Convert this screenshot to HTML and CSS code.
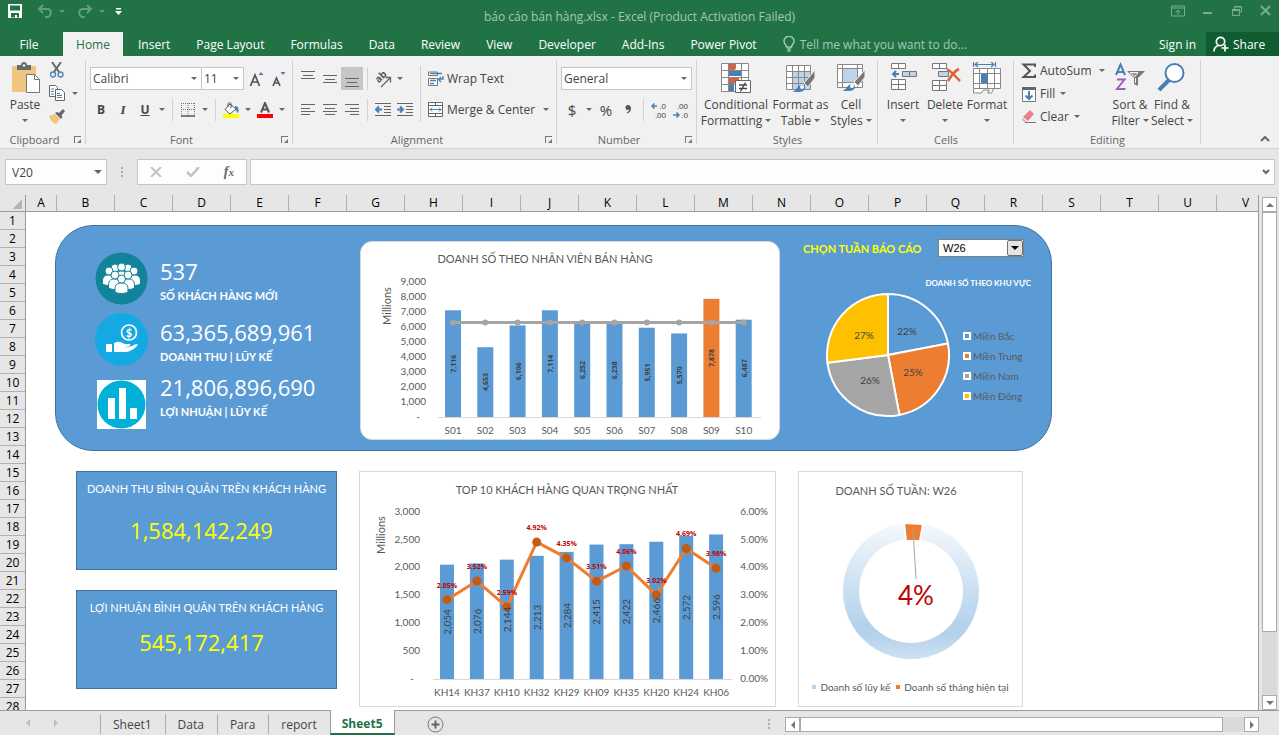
FILE: index.html
```html
<!DOCTYPE html>
<html lang="vi">
  <head>
    <meta charset="UTF-8" />
    <meta name="viewport" content="width=device-width, initial-scale=1.0" />
    <title>báo cáo bán hàng.xlsx - Excel</title>
    <link rel="stylesheet" href="styles.css">
  </head>
  <body>
    <header class="titlebar">
      <div class="quick">
        <button aria-label="Save"><svg width="16" height="16" viewBox="0 0 16 16"><path d="M1 1h14v14H1z" fill="#fff"/><path d="M3 2.500h10v5H3zM4 10h8v4.500h-2V12H8v2.500H4z" fill="#217346"/></svg></button>
        <button aria-label="Undo" class="faded"><svg width="16" height="16" viewBox="0 0 16 16"><path d="M6 2L2 6l4 4M2 6h8c5 0 5 7 0 8H8" fill="none" stroke="#fff" stroke-width="2"/></svg></button>
        <span class="caret faded light"></span>
        <button aria-label="Redo" class="faded redo"><svg width="16" height="16" viewBox="0 0 16 16"><path d="M10 2l4 4-4 4M14 6H6c-5 0-5 7 0 8h2" fill="none" stroke="#fff" stroke-width="2"/></svg></button>
        <span class="caret faded light"></span>
        <button aria-label="Customize" class="custom"><svg width="7" height="8" viewBox="0 0 7 8"><path d="M1 1h5v1.500H1zM0 4h7L3.500 8z" fill="#fff"/></svg></button>
      </div>
      <h1>báo cáo bán hàng.xlsx - Excel (Product Activation Failed)</h1>
      <div class="window-buttons">
        <button aria-label="Ribbon options"><svg width="14" height="12" viewBox="0 0 14 12"><path d="M.5 1h13v10H.5zM.5 3h13M7 10V5M4.500 7.500L7 5l2.500 2.500" fill="none" stroke="#fff"/></svg></button>
        <button aria-label="Minimize"><svg width="12" height="12" viewBox="0 0 12 12"><path d="M1 7h9v2H1z" fill="#fff"/></svg></button>
        <button aria-label="Restore"><svg width="12" height="12" viewBox="0 0 12 12"><path d="M1.500 5h7v5.500h-7zM3.500 5V1.500h7V7H9" fill="none" stroke="#fff"/><path d="M1 4h8v2H1zM3 1h8v1.500H3z" fill="#fff"/></svg></button>
        <button aria-label="Close"><svg width="12" height="12" viewBox="0 0 12 12"><path d="M1 1l9 9M10 1l-9 9" stroke="#fff" stroke-width="2"/></svg></button>
      </div>
    </header>

    <nav class="tabs">
      <button class="file">File</button>
      <button class="active">Home</button>
      <button>Insert</button>
      <button>Page Layout</button>
      <button>Formulas</button>
      <button>Data</button>
      <button>Review</button>
      <button>View</button>
      <button>Developer</button>
      <button>Add-Ins</button>
      <button>Power Pivot</button>
      <button class="tell"><svg width="12" height="16" viewBox="0 0 12 16"><path d="M3.500 11C3.500 8.500 1 8 1 5.300a5 5 0 0 1 10 0C11 8 8.500 8.500 8.500 11zM4 13h4M4.500 15h3" fill="none" stroke="#a6c7b5" stroke-width="1.500"/></svg>Tell me what you want to do...</button>
      <button class="signin">Sign in</button>
      <button class="share"><svg width="16" height="16" viewBox="0 0 16 16"><circle cx="7.500" cy="5.500" r="4.200" fill="none" stroke="#fff" stroke-width="1.700"/><path d="M1 15.500c0-4 2-5.500 5-6M8.500 12h7M12 8.500v7" fill="none" stroke="#fff" stroke-width="1.700"/></svg>Share</button>
    </nav>

    <section class="ribbon">
      <div class="group clipboard">
        <div class="tools">
          <button class="big"><svg width="32" height="32" viewBox="0 0 32 32"><path d="M3 4h24v26H3z" fill="#eec67e"/><path d="M8 8V3h4c0-4 6-4 6 0h4v5z" fill="#6a6a6a"/><circle cx="15" cy="3.500" r="1.300" fill="#f1f1f1"/><path d="M17.500 12.500h8l5 5v13h-13z" fill="#fff" stroke="#777"/><path d="M25.500 12.500v5h5" fill="none" stroke="#777"/></svg><span>Paste</span><i class="caret"></i></button>
          <div class="clip-col">
            <button aria-label="Cut"><svg width="16" height="16" viewBox="0 0 16 16"><path d="M3 0l7 10M12 0L5 10" stroke="#666" stroke-width="2"/><circle cx="4" cy="12.500" r="2.500" fill="none" stroke="#4a7fb5" stroke-width="1.300"/><circle cx="11.500" cy="12.500" r="2.500" fill="none" stroke="#4a7fb5" stroke-width="1.300"/></svg></button>
            <button aria-label="Copy"><svg width="16" height="16" viewBox="0 0 16 16"><path d="M.5.5h6l2 2v9h-8z" fill="#fff" stroke="#666"/><path d="M6.500 4.500h6l3 3v8h-9z" fill="#fff" stroke="#666"/><path d="M2 4h3M2 6.500h3M2 9h3M8 8.500h3M8 10.500h5M8 12.500h5" stroke="#4a7fb5"/></svg></button><i class="caret"></i>
            <button aria-label="Format Painter"><svg width="16" height="16" viewBox="0 0 16 16"><path d="M0 8l6-2 5 5-4 5c-3-1-6-4-7-8z" fill="#eec67e"/><path d="M6 5l6 6 1.500-2-1-1.500L16 3l-2-2-4 4-2-1z" fill="#666"/></svg></button>
          </div>
        </div>
        <h2>Clipboard</h2>
        <button class="launch" aria-label="Clipboard options"></button>
      </div>

      <div class="group font">
        <div class="rows">
          <div class="row">
            <label class="combo font-name"><select aria-label="Font"><option>Calibri</option></select></label>
            <label class="combo font-size"><select aria-label="Font size"><option>11</option></select></label>
            <button class="tool grow" aria-label="Increase font"><svg width="16" height="16" viewBox="0 0 16 16"><path d="M1.500 15L6 4l4.500 11M3 11h6" fill="none" stroke="#555" stroke-width="1.700"/><path d="M9.500 4h5L12 1z" fill="#4a7fb5"/></svg></button>
            <button class="tool" aria-label="Decrease font"><svg width="16" height="16" viewBox="0 0 16 16"><path d="M2 15l3.500-8L9 15M3 12h5" fill="none" stroke="#555" stroke-width="1.700"/><path d="M9.500 1h5L12 4z" fill="#4a7fb5"/></svg></button>
          </div>
          <div class="row">
            <button class="tool bold">B</button>
            <button class="tool italic">I</button>
            <button class="tool underline">U</button>
            <i class="caret"></i><i class="sep"></i>
            <button class="tool" aria-label="Borders"><svg width="14" height="14" viewBox="0 0 14 14"><path d="M.5 0v13M7 0v13M13.500 0v13M0 .5h14M0 6.500h14" fill="none" stroke="#777" stroke-dasharray="1 1"/><path d="M0 13h14" stroke="#555" stroke-width="1.500"/></svg></button>
            <i class="caret"></i><i class="sep"></i>
            <button class="tool" aria-label="Fill Color"><svg width="17" height="16" viewBox="0 0 17 16"><path d="M7 2l6 5-6 5-5-4.500z" fill="#fff" stroke="#555"/><path d="M5 5V1.500q2-2 3 0V6" fill="none" stroke="#555"/><path d="M12 4c4 0 4 4 3 7-2-1-2-4-3-5z" fill="#4a7fb5"/><path d="M0 12h16v4H0z" fill="#ff0"/></svg></button>
            <i class="caret"></i>
            <button class="tool" aria-label="Font Color"><svg width="17" height="16" viewBox="0 0 17 16"><path d="M4 10.500L8 1l4 9.500M5.500 7.500h5" fill="none" stroke="#555" stroke-width="2"/><path d="M0 12h16v4H0z" fill="#f00"/></svg></button>
            <i class="caret"></i>
          </div>
        </div>
        <h2>Font</h2>
        <button class="launch" aria-label="Font options"></button>
      </div>

      <div class="group alignment">
        <div class="align-cols">
          <div class="rows">
            <div class="row">
              <button class="tool" aria-label="Top align"><svg class="lines" width="14" height="16" viewBox="0 0 14 16"><path d="M0 .5h14M2 4.500h10M0 7.500h14"/></svg></button>
              <button class="tool" aria-label="Middle align"><svg class="lines" width="14" height="16" viewBox="0 0 14 16"><path d="M0 4.500h14M2 8.500h10M0 11.500h14"/></svg></button>
              <button class="tool pressed" aria-label="Bottom align"><svg class="lines" width="14" height="16" viewBox="0 0 14 16"><path d="M0 7.500h14M2 11.500h10M0 15.500h14"/></svg></button>
              <i class="sep"></i>
              <button class="tool" aria-label="Orientation"><svg width="20" height="20" viewBox="0 0 20 20"><text x="8" y="11" transform="rotate(-45 8 8)" class="ab">ab</text><path d="M8 18l9-9M12.500 8.500h5v5" fill="none" stroke="#666" stroke-width="1.300"/></svg></button>
              <i class="caret"></i>
            </div>
            <div class="row">
              <button class="tool" aria-label="Align left"><svg class="lines" width="14" height="12" viewBox="0 0 14 12"><path d="M0 .5h14M0 4.500h9M0 7.500h14M0 10.500h9"/></svg></button>
              <button class="tool" aria-label="Center"><svg class="lines" width="14" height="12" viewBox="0 0 14 12"><path d="M0 .5h14M2 4.500h10M0 7.500h14M2 10.500h10"/></svg></button>
              <button class="tool" aria-label="Align right"><svg class="lines" width="14" height="12" viewBox="0 0 14 12"><path d="M0 .5h14M5 4.500h9M0 7.500h14M5 10.500h9"/></svg></button>
              <i class="sep"></i>
              <button class="tool" aria-label="Decrease indent"><svg class="lines" width="16" height="14" viewBox="0 0 16 14"><path d="M0 .5h16M9 3.500h7M9 6.500h7M9 9.500h7M0 12.500h16"/><path class="blue" d="M7 6.500H1M4 3.500l-3 3 3 3"/></svg></button>
              <button class="tool" aria-label="Increase indent"><svg class="lines" width="16" height="14" viewBox="0 0 16 14"><path d="M0 .5h16M9 3.500h7M9 6.500h7M9 9.500h7M0 12.500h16"/><path class="blue" d="M0 6.500h6M3 3.500l3 3-3 3"/></svg></button>
            </div>
          </div>
          <i class="sep tall"></i>
          <div class="rows">
            <div class="row">
              <button class="text-tool"><svg width="16" height="16" viewBox="0 0 16 16"><path d="M.5 1v3.500h9V1zM.5 7.500h9v7h-9z" fill="#fff" stroke="#777"/><path d="M2 2.500h12M2 9.500h6M2 12.500h4M15 5v3h-4M13 6l-2.500 2.500L13 11" fill="none" stroke="#4a7fb5" stroke-width="1.300"/></svg>Wrap Text</button>
            </div>
            <div class="row">
              <button class="text-tool"><svg width="16" height="16" viewBox="0 0 16 16"><path d="M.5.5h14v14H.5zM.5 3.500h14M.5 11.500h14M7.500 0v3.500M7.500 11.500v3" fill="#fff" stroke="#666"/><path d="M2 7.500h11M4 5.500l-2 2 2 2M11 5.500l2 2-2 2" fill="none" stroke="#4a7fb5"/></svg>Merge &amp; Center</button>
              <i class="caret"></i>
            </div>
          </div>
        </div>
        <h2>Alignment</h2>
        <button class="launch" aria-label="Alignment options"></button>
      </div>

      <div class="group number">
        <div class="rows">
          <div class="row">
            <label class="combo number-format"><select aria-label="Number format"><option>General</option></select></label>
          </div>
          <div class="row">
            <button class="tool sign">$</button>
            <i class="caret"></i>
            <button class="tool sign percent">%</button>
            <button class="tool" aria-label="Comma style"><svg width="6" height="9" viewBox="0 0 6 9"><circle cx="3" cy="2.500" r="2.500" fill="#555"/><path d="M5 2c1 3-1 5-3 6" fill="none" stroke="#555" stroke-width="1.300"/></svg></button>
            <i class="sep"></i>
            <button class="tool decimals" aria-label="Increase decimal"><svg width="18" height="20" viewBox="0 0 18 20"><path d="M7 6H2M4.500 3.500L2 6l2.500 2.500" fill="none" stroke="#4a7fb5" stroke-width="1.500"/><text x="16" y="9">.0</text><text x="16" y="18">.00</text></svg></button>
            <button class="tool decimals" aria-label="Decrease decimal"><svg width="18" height="20" viewBox="0 0 18 20"><path d="M1 15h6M4.500 12.500L7 15l-2.500 2.500" fill="none" stroke="#4a7fb5" stroke-width="1.500"/><text x="16" y="9">.00</text><text x="16" y="18">.0</text></svg></button>
          </div>
        </div>
        <h2>Number</h2>
        <button class="launch" aria-label="Number options"></button>
      </div>

      <div class="group styles">
        <div class="tools">
          <button class="big wide"><svg width="32" height="32" viewBox="0 0 32 32"><path d="M1.500 1.500h27v28h-27z" fill="#fff"/><path d="M9 2h6v6H9zM9 15h10v6H9z" fill="#d9623f"/><path d="M9 8h12v6H9zM9 21h5v8H9z" fill="#4a7fb5"/><path d="M1.500 1.500h27v28h-27zM8.500 1v29M15.500 1v6M21.500 1v29M1 8.500h28M1 15.500h28M1 22.500h28" fill="none" stroke="#888"/><path d="M15.500 18.500h15v12h-15z" fill="#fff" stroke="#666"/><path d="M19 23h8M19 26.500h8M25.500 20.500l-5 9" stroke="#444" stroke-width="1.300"/></svg><span>Conditional</span><span>Formatting<i class="caret"></i></span></button>
          <button class="big mid"><svg width="32" height="32" viewBox="0 0 32 32"><path d="M1.500 3.500h24v24h-24z" fill="#fff"/><path d="M8 9h18v18H8z" fill="#bdd3e8"/><path d="M1.500 3.500h24v24h-24zM7.500 3v25M13.500 3v25M19.500 3v25M1 9.500h25M1 15.500h25M1 21.500h25" fill="none" stroke="#888"/><path d="M19 21L30 8v8l-7 9z" fill="#777" stroke="#f1f1f1"/><path d="M7 30c5-1 5-8 11-7 4 2 2 7-4 7z" fill="#4a7fb5"/><circle cx="17" cy="25" r="2" fill="#fff"/></svg><span>Format as</span><span>Table<i class="caret"></i></span></button>
          <button class="big"><svg width="32" height="32" viewBox="0 0 32 32"><path d="M2.500 2.500h25v23h-25z" fill="#fff"/><path d="M8 7h14v13H8z" fill="#bdd3e8"/><path d="M2.500 2.500h25v23h-25zM7.500 2v24M22.500 2v24M2 6.500h26M2 20.500h26" fill="none" stroke="#888"/><path d="M19 20L30 8v7l-7 9z" fill="#777" stroke="#f1f1f1"/><path d="M7 29c5-1 5-8 11-7 4 2 2 7-4 7z" fill="#4a7fb5"/><circle cx="17" cy="24" r="2" fill="#fff"/></svg><span>Cell</span><span>Styles<i class="caret"></i></span></button>
        </div>
        <h2>Styles</h2>
      </div>

      <div class="group cells">
        <div class="tools">
          <button class="big"><svg width="32" height="32" viewBox="0 0 32 32"><path d="M4.500 1.500h14v5h-14zM11.500 1.500v5M4.500 17.500h14v10h-14zM4.500 22.500h14M11.500 17.500v10" fill="#fff" stroke="#777"/><path d="M15.500 9.500h14v5h-14zM22.500 9.500v5" fill="#bdd3e8" stroke="#777"/><path d="M12 12H6M9 9l-3 3 3 3" fill="none" stroke="#4a7fb5" stroke-width="2"/></svg><span>Insert</span><i class="caret"></i></button>
          <button class="big"><svg width="32" height="32" viewBox="0 0 32 32"><path d="M3.500 1.500h14v5h-14zM10.500 1.500v5M3.500 18.500h14v10h-14zM3.500 23.500h14M10.500 18.500v10" fill="#fff" stroke="#777"/><path d="M9.500 9.500h10v5h-10z" fill="#bdd3e8" stroke="#777"/><path d="M18 7c5 3 8 7 13 12M30 7c-5 2-8 7-11 12" fill="none" stroke="#d9623f" stroke-width="2.500"/></svg><span>Delete</span><i class="caret"></i></button>
          <button class="big"><svg width="32" height="32" viewBox="0 0 32 32"><path d="M2.500 6.500h27v20h-27zM8.500 6v21M16.500 6v21M23.500 6v21M2 11.500h28M2 21.500h28" fill="#fff" stroke="#888"/><path d="M10 12h7v9h-7z" fill="#4a7fb5"/><path d="M2.500 0v5M24.500 0v5M4 2.500h19M7 0L4 2.500 7 5M20 0l3 2.500L20 5" fill="none" stroke="#4a7fb5" stroke-width="1.200"/><path d="M2.500 27v4h8l2-3h6l-2 3h4l2-4" fill="#fff" stroke="#888"/></svg><span>Format</span><i class="caret"></i></button>
        </div>
        <h2>Cells</h2>
      </div>

      <div class="group editing">
        <div class="tools">
          <div class="edit-col">
            <button class="text-tool autosum"><svg width="16" height="16" viewBox="0 0 16 16"><path d="M14 4V1.500H2.500L9 8l-6.500 6H14v-2.500" fill="none" stroke="#555" stroke-width="2"/></svg>AutoSum<i class="caret"></i></button>
            <button class="text-tool"><svg width="16" height="16" viewBox="0 0 16 16"><path d="M1.500 1.500h13v14h-13z" fill="#fff" stroke="#777"/><path d="M1 1h14v3H1z" fill="#666"/><path d="M8 5v8M4.500 9.500L8 13l3.500-3.500" fill="none" stroke="#4a7fb5" stroke-width="2"/></svg>Fill<i class="caret"></i></button>
            <button class="text-tool"><svg width="16" height="16" viewBox="0 0 16 16"><path d="M9 1l4 4-6 7-5-4z" fill="#e8818f"/><path d="M1.500 9l4.500 4H4l-3-2z" fill="#ee9aa5"/><path d="M4 13.500h11" stroke="#777"/></svg>Clear<i class="caret"></i></button>
          </div>
          <button class="big"><svg width="32" height="32" viewBox="0 0 32 32"><path d="M2 13L6.500 2.500 11 13M4 10h6" fill="none" stroke="#4a7fb5" stroke-width="2"/><path d="M3 17.500h7.500L3 27h8.500" fill="none" stroke="#9b5fb5" stroke-width="2"/><path d="M13 9h18l-7 7v8l-4-2v-6z" fill="#777"/><path d="M16 10.500h8L20.500 15zM21.500 16v5" fill="#999" stroke="#f1f1f1"/></svg><span>Sort &amp;</span><span>Filter<i class="caret"></i></span></button>
          <button class="big"><svg width="32" height="32" viewBox="0 0 32 32"><path d="M3 28l10-10" stroke="#4a7fb5" stroke-width="4"/><circle cx="18.500" cy="11" r="9" fill="#fff" stroke="#4a7fb5" stroke-width="2"/></svg><span>Find &amp;</span><span>Select<i class="caret"></i></span></button>
        </div>
        <h2>Editing</h2>
      </div>
      <button class="collapse" aria-label="Collapse ribbon"><svg width="10" height="6" viewBox="0 0 10 6"><path d="M1 5l4-4 4 4" fill="none" stroke="#666" stroke-width="2"/></svg></button>
    </section>

    <section class="formula-bar">
      <label class="combo name-box"><select aria-label="Name box"><option>V20</option></select></label>
      <span class="dots"></span>
      <div class="fx-box">
        <button aria-label="Cancel"><svg width="12" height="10" viewBox="0 0 12 10"><path d="M1 0l10 10M11 0L1 10" stroke="#c3c3c3" stroke-width="2"/></svg></button>
        <button aria-label="Enter"><svg width="14" height="10" viewBox="0 0 14 10"><path d="M1 5l4 4 8-9" fill="none" stroke="#c3c3c3" stroke-width="2.500"/></svg></button>
        <button class="fx">f<small>x</small></button>
      </div>
      <div class="formula">
        <input type="text" aria-label="Formula" />
        <svg width="8" height="6" viewBox="0 0 8 6"><path d="M1 1l3 3 3-3" fill="none" stroke="#666" stroke-width="2"/></svg>
      </div>
    </section>

    <main class="workbook">
      <div class="sheet">
        <div class="col-head" id="colHead"><span class="corner"></span></div>
        <div class="sheet-body">
          <div class="row-head" id="rowHead"></div>
          <div class="canvas">
            <section class="panel">
              <div class="kpi-icons">
                <svg width="53" height="53" viewBox="0 0 53 53">
                  <circle cx="26.500" cy="26.500" r="26" fill="#11839b"/>
                  <defs>
                    <g id="person"><path d="M-6.500 13v-3c0-5 3-6 6.500-6s6.500 1 6.500 6v3c-4 2-9 2-13 0z"/><circle cx="0" cy="0" r="4"/></g>
                  </defs>
                  <g fill="#fff" stroke="#11839b">
                    <use href="#person" x="20" y="16"/><use href="#person" x="33" y="16"/><use href="#person" x="26.500" y="15"/>
                    <use href="#person" x="14" y="19"/><use href="#person" x="39" y="19"/>
                    <use href="#person" x="20" y="23"/><use href="#person" x="33" y="23"/><use href="#person" x="26.500" y="27"/>
                  </g>
                </svg>
                <svg width="53" height="53" viewBox="0 0 53 53">
                  <circle cx="26.500" cy="26.500" r="26.500" fill="#15a9e3"/>
                  <circle cx="34" cy="19.500" r="7.500" fill="none" stroke="#fff" stroke-width="1.700"/>
                  <text x="34" y="24" class="dollar">$</text>
                  <path d="M11 31h6v8h-6zM19 30c6-3 8 0 11 1h5c1 2-1 3-6 3 4 1 8-1 12-3 2 0 2 1 1 2-4 4-8 6-12 6h-11z" fill="#fff"/>
                </svg>
                <svg width="49" height="49" viewBox="0 0 49 49">
                  <path d="M0 0h49v49H0z" fill="#fff"/><circle cx="24.500" cy="24.500" r="24" fill="#00b0d8"/>
                  <path d="M11 18h7v21h-7zM22 8h7v31h-7zM33 28h7v11h-7z" fill="#fff"/>
                </svg>
              </div>
              <dl class="kpis">
                <div><dd>537</dd><dt>SỐ KHÁCH HÀNG MỚI</dt></div>
                <div><dd>63,365,689,961</dd><dt>DOANH THU | LŨY KẾ</dt></div>
                <div><dd>21,806,896,690</dd><dt>LỢI NHUẬN | LŨY KẾ</dt></div>
              </dl>
              <div class="sales-card">
                <svg id="salesChart" class="chart" viewBox="0 0 418 197" role="img" aria-label="Doanh số theo nhân viên"></svg>
              </div>
              <div class="region">
                <div class="week">
                  <label for="week">CHỌN TUẦN BÁO CÁO</label>
                  <span class="week-select"><select id="week"><option>W26</option></select></span>
                </div>
                <h3>DOANH SỐ THEO KHU VỰC</h3>
                <div class="region-body">
                  <svg id="pieChart" class="chart" width="126" height="126" viewBox="0 0 126 126" role="img" aria-label="Doanh số theo khu vực"></svg>
                  <ul class="pie-legend">
                    <li class="bac">Miền Bắc</li>
                    <li class="trung">Miền Trung</li>
                    <li class="nam">Miền Nam</li>
                    <li class="dong">Miền Đông</li>
                  </ul>
                </div>
              </div>
            </section>

            <section class="lower">
              <div class="averages">
                <div class="average">
                  <h3>DOANH THU BÌNH QUÂN TRÊN KHÁCH HÀNG</h3>
                  <p>1,584,142,249</p>
                </div>
                <div class="average profit">
                  <h3>LỢI NHUẬN BÌNH QUÂN TRÊN KHÁCH HÀNG</h3>
                  <p>545,172,417</p>
                </div>
              </div>
              <div class="top-card">
                <svg id="topChart" class="chart" viewBox="0 0 415 234" role="img" aria-label="Top 10 khách hàng"></svg>
              </div>
              <div class="week-card">
                <h3>DOANH SỐ TUẦN: W26</h3>
                <svg class="chart" width="136" height="136" viewBox="0 0 136 136" role="img" aria-label="4%">
                  <defs>
                    <linearGradient id="ring" x1="0" y1="0" x2="0" y2="1">
                      <stop offset="0" stop-color="#f5f9fd"/>
                      <stop offset=".74" stop-color="#b5d2ec"/>
                      <stop offset=".83" stop-color="#b5d2ec"/>
                      <stop offset="1" stop-color="#cfe1f3"/>
                    </linearGradient>
                  </defs>
                  <path d="M68 0a68 68 0 1 1-.1 0zM68 16a52 52 0 1 0 .1 0z" fill="url(#ring)"/>
                  <path d="M61 0l19 1-3 17H63z" fill="#ed7d31" stroke="#fff" stroke-width="2"/>
                  <path d="M70 7l3 49" stroke="#a6a6a6"/>
                  <text x="73" y="82" class="share-value">4%</text>
                </svg>
                <ul class="ring-legend">
                  <li>Doanh số lũy kế</li>
                  <li class="current">Doanh số tháng hiện tại</li>
                </ul>
              </div>
            </section>
          </div>
        </div>
      </div>
      <div class="vscroll">
        <button aria-label="Scroll up"><i class="up"></i></button>
        <div class="track"><div class="thumb"></div></div>
        <button aria-label="Scroll down"><i class="down"></i></button>
      </div>
    </main>

    <footer class="sheet-tabs">
      <div class="sheet-nav"><i class="left"></i><i class="right"></i></div>
      <button>Sheet1</button>
      <button>Data</button>
      <button>Para</button>
      <button>report</button>
      <button class="active">Sheet5</button>
      <button class="add" aria-label="New sheet"><svg width="17" height="17" viewBox="0 0 17 17"><circle cx="8.500" cy="8.500" r="7.500" fill="none" stroke="#777"/><path d="M8.500 4.500v8M4.500 8.500h8" stroke="#666" stroke-width="2"/></svg></button>
      <span class="dots"></span>
      <div class="hscroll">
        <button aria-label="Scroll left"><i class="left"></i></button>
        <div class="thumb"></div>
        <button aria-label="Scroll right"><i class="right"></i></button>
      </div>
    </footer>

    <script src="script.js"></script>
  </body>
</html>
```
FILE: styles.css
```css
*,
*::before {
  box-sizing: border-box;
}

body {
  margin: 0;
  height: 100vh;
  display: flex;
  flex-direction: column;
  overflow: hidden;
  background-color: #e6e6e6;
  color: #444;
  font-family: "Open Sans", "Noto Sans", sans-serif;
  font-size: 12px;
}

h1, h2, h3, p, ul, dl, dd, dt {
  margin: 0;
  padding: 0;
  font-weight: normal;
  font-size: 12px;
}

ul {
  list-style: none;
}

button {
  border: 0;
  padding: 0;
  background: none;
  color: inherit;
  font: inherit;
  white-space: nowrap;
}

svg {
  display: block;
  flex: none;
}

/* title bar */
.titlebar {
  display: grid;
  grid-template-columns: 1fr auto 1fr;
  align-items: center;
  height: 32px;
  flex: none;
  background-color: #217346;
  color: #a6c7b5;
}

.quick {
  display: flex;
  align-items: center;
  gap: 6px;
  height: 22px;
  align-self: start;
  padding-left: 7px;
}

.quick button:nth-child(2) {
  margin-left: 8px;
}

.quick .redo {
  margin-left: 6px;
}

.quick .custom {
  margin-left: 4px;
}

.faded {
  opacity: 0.3;
}

.window-buttons {
  display: flex;
  justify-content: flex-end;
  align-items: center;
  gap: 17px;
  height: 22px;
  align-self: start;
  padding-right: 7px;
  opacity: 0.4;
}

.caret {
  flex: none;
  display: inline-block;
  border: 3px solid transparent;
  border-top-color: #666;
  border-bottom: 0;
}

.caret.light {
  border-top-color: #fff;
}

/* ribbon tabs */
.tabs {
  display: flex;
  height: 24px;
  flex: none;
  background-color: #217346;
  color: #fff;
}

.tabs button {
  padding: 0 13px;
}

.tabs .file {
  width: 63px;
  padding: 0 5px 0 0;
}

.tabs .active {
  width: 60px;
  margin-right: 2px;
  background-color: #f1f1f1;
  color: #217346;
}

.tabs .tell {
  display: flex;
  align-items: center;
  gap: 5px;
  color: #a6c7b5;
}

.tabs .signin {
  margin-left: auto;
  padding: 0 10px;
}

.tabs .share {
  display: flex;
  align-items: center;
  gap: 4px;
  width: 73px;
  padding: 0 0 0 7px;
  background-color: #0e5c2f;
}

/* ribbon */
.ribbon {
  display: flex;
  height: 93px;
  flex: none;
  background-color: #f1f1f1;
  border-bottom: 1px solid #d2d2d2;
}

.group {
  position: relative;
  display: flex;
  flex-direction: column;
  justify-content: space-between;
}

.group::after {
  content: "";
  position: absolute;
  right: 0;
  top: 4px;
  bottom: 4px;
  border-right: 1px solid #d2d2d2;
}

.group h2 {
  height: 17px;
  line-height: 17px;
  font-size: 11px;
  text-align: center;
  color: #666;
}

.clipboard { width: 86px; }
.clipboard h2 { padding-right: 17px; }
.font { width: 207px; padding-left: 4px; }
.font h2 { padding-right: 20px; }
.alignment { width: 264px; padding-left: 4px; }
.alignment h2 { padding-right: 20px; }
.number { width: 140px; padding-left: 4px; }
.number h2 { padding-right: 20px; }
.styles { width: 181px; }
.cells { width: 136px; }
.editing { width: 187px; }

.launch {
  position: absolute;
  right: 5px;
  bottom: 5px;
  width: 7px;
  height: 7px;
  border-left: 1px solid #777;
  border-top: 1px solid #777;
}

.launch::after {
  content: "";
  position: absolute;
  right: 0;
  bottom: 0;
  border: 2px solid #777;
  border-left-color: transparent;
  border-top-color: transparent;
}

.tools {
  display: flex;
  padding-left: 4px;
}

.rows {
  display: flex;
  flex-direction: column;
  gap: 8px;
  padding-top: 11px;
}

.row {
  display: flex;
  align-items: center;
  height: 23px;
}

.big {
  display: flex;
  flex-direction: column;
  align-items: center;
  width: 42px;
  padding-top: 6px;
}

.big span {
  height: 16px;
  line-height: 16px;
  margin-top: 3px;
}

.big span + span {
  margin-top: 0;
}

.big .caret {
  margin-top: 6px;
}

.big span .caret {
  margin: 0 0 3px 3px;
}

.big.wide { width: 70px; }
.big.mid { width: 59px; }

.clip-col {
  display: grid;
  grid-template-columns: 16px 6px;
  grid-template-rows: repeat(3, 16px);
  gap: 7px;
  align-items: center;
  padding: 6px 0 0 3px;
}

.clip-col button:first-child {
  grid-column: 1 / 3;
}

.combo {
  position: relative;
  height: 23px;
  background-color: #fff;
  border: 1px solid #c6c6c6;
}

.combo::after {
  content: "";
  position: absolute;
  right: 4px;
  top: 9px;
  border: 3px solid transparent;
  border-top-color: #666;
  border-bottom: 0;
}

.combo select {
  appearance: none;
  width: 100%;
  height: 100%;
  padding: 0 2px;
  border: 0;
  background: none;
  color: #444;
  font: inherit;
}

.font-name { width: 112px; }
.font-size { width: 43px; margin-left: -1px; }
.number-format { width: 131px; }

.tool {
  display: flex;
  align-items: center;
  justify-content: center;
  width: 22px;
  height: 23px;
  flex: none;
}

.grow {
  margin-left: 2px;
}

.row .caret {
  margin: 0 3px;
}

.bold { font-weight: bold; }
.italic { font: italic bold 13px "Liberation Serif", serif; }
.underline { font-weight: bold; text-decoration: underline; }

.pressed {
  background-color: #c6c6c6;
}

.sep {
  flex: none;
  height: 22px;
  margin: 0 4px;
  border-left: 1px solid #d2d2d2;
}

.sep.tall {
  height: 56px;
  margin: 10px 7px 0 4px;
}

.align-cols {
  display: flex;
}

.lines {
  fill: none;
  stroke: #666;
}

.lines .blue {
  stroke: #4a7fb5;
  stroke-width: 2px;
}

.ab {
  fill: #555;
  font-size: 10px;
  font-weight: bold;
  text-anchor: middle;
}

.text-tool {
  display: flex;
  align-items: center;
  gap: 3px;
}

.text-tool .caret {
  margin-left: 2px;
}

.alignment .text-tool + .caret {
  margin-left: 8px;
}

.sign {
  font-size: 15px;
}

.decimals text {
  fill: #444;
  font: 8px "Liberation Sans", sans-serif;
  text-anchor: end;
}

.edit-col {
  width: 91px;
  padding: 3px 0 0 3px;
}

.edit-col .text-tool {
  height: 23px;
}

.autosum .caret {
  margin-left: 4px;
}

.collapse {
  margin: 80px 9px 0 auto;
  height: 6px;
}

/* formula bar */
.formula-bar {
  display: flex;
  align-items: flex-start;
  height: 46px;
  flex: none;
  padding: 10px 4px 0 5px;
}

.name-box {
  width: 102px;
  height: 26px;
  background-color: #fdfdfd;
}

.name-box::after {
  border-width: 4px 4px 0;
  top: 10px;
}

.name-box select {
  padding-left: 6px;
}

.dots {
  width: 2px;
  height: 10px;
  margin: 8px 14px 0;
  background: repeating-linear-gradient(#aaa 0 2px, transparent 2px 4px);
}

.fx-box {
  display: flex;
  align-items: center;
  justify-content: space-around;
  width: 110px;
  height: 26px;
  background-color: #fdfdfd;
  border: 1px solid #c6c6c6;
}

.fx {
  font: italic bold 14px "Liberation Serif", serif;
  color: #666;
}

.fx small {
  font-size: 11px;
}

.formula {
  display: flex;
  align-items: center;
  flex: 1;
  height: 26px;
  margin-left: 3px;
  padding-right: 4px;
  background-color: #fdfdfd;
  border: 1px solid #c6c6c6;
}

.formula input {
  flex: 1;
  border: 0;
  background: none;
}

/* worksheet */
.workbook {
  display: flex;
  flex: 1;
  min-height: 0;
}

.sheet {
  display: flex;
  flex-direction: column;
  flex: 1;
  min-width: 0;
  border-right: 1px solid #9b9b9b;
}

.col-head {
  display: flex;
  height: 17px;
  flex: none;
  overflow: hidden;
  border-bottom: 1px solid #9b9b9b;
  color: #000;
}

.col-head span {
  flex: none;
  width: 58px;
  line-height: 16px;
  text-align: center;
  border-right: 1px solid #b1b1b1;
}

.col-head span:nth-child(2) {
  width: 31px;
}

.col-head .corner {
  width: 26px;
  border-right-color: #9b9b9b;
  background: linear-gradient(135deg, transparent 50%, #b4b4b4 50%) 12px 4px / 10px 10px no-repeat;
}

.sheet-body {
  display: flex;
  flex: 1;
  min-height: 0;
  overflow: hidden;
}

.row-head {
  width: 26px;
  flex: none;
  border-right: 1px solid #9b9b9b;
  color: #000;
}

.row-head div {
  height: 18px;
  line-height: 17px;
  text-align: center;
  border-bottom: 1px solid #b1b1b1;
}

.canvas {
  flex: 1;
  background-color: #fff;
  font-family: Lato, "Open Sans", sans-serif;
}

.panel {
  display: flex;
  width: 997px;
  height: 226px;
  margin: 13px 0 0 29px;
  padding-left: 38px;
  background-color: #5b9bd5;
  border: 1px solid #41719c;
  border-radius: 38px;
}

.kpi-icons {
  display: flex;
  flex-direction: column;
  align-items: center;
  width: 54px;
  padding-top: 26px;
}

.kpi-icons svg {
  margin-bottom: 8px;
}

.kpi-icons svg:nth-child(2) {
  margin-bottom: 14px;
}

.dollar {
  fill: #fff;
  font-size: 11px;
  font-weight: bold;
  text-anchor: middle;
}

.kpis {
  width: 212px;
  padding: 32px 0 0 12px;
  color: #fff;
}

.kpis div {
  margin-bottom: 5px;
}

.kpis div:first-child {
  margin-bottom: 11px;
}

.kpis dd {
  font: 22px/26px "Open Sans", sans-serif;
}

.kpis dt {
  font-size: 11px;
  font-weight: bold;
  line-height: 24px;
}

.sales-card {
  width: 420px;
  height: 199px;
  margin-top: 15px;
  background-color: #fff;
  border: 1px solid #d9d9d9;
  border-radius: 12px;
}

.chart text {
  fill: #595959;
  font-size: 10px;
}

.chart .title {
  font-size: 11px;
  text-anchor: middle;
}

.chart .axis-name {
  font-size: 11px;
  text-anchor: middle;
}

.chart .mid {
  text-anchor: middle;
}

.chart .end {
  text-anchor: end;
}

.chart .tiny {
  fill: #404040;
  font: bold 7px "Open Sans", sans-serif;
  text-anchor: middle;
}

.chart .bar-value {
  fill: #404040;
  text-anchor: middle;
}

.chart .red {
  fill: #c00000;
}

.chart .pie-value {
  fill: #404040;
  text-anchor: middle;
}

.chart .share-value {
  fill: #c00000;
  font-size: 26px;
  text-anchor: middle;
}

.region {
  flex: 1;
  padding: 13px 20px 0 23px;
}

.week {
  display: flex;
  align-items: center;
  justify-content: space-between;
  height: 18px;
  padding-right: 7px;
}

.week label {
  color: #ff0;
  font-size: 11px;
  font-weight: bold;
}

.week-select {
  position: relative;
  width: 86px;
  height: 18px;
  background-color: #fff;
  border: 1px solid #808080;
}

.week-select::after {
  content: "";
  position: absolute;
  right: 4px;
  top: 6px;
  border: 4px solid transparent;
  border-top-color: #000;
  border-bottom: 0;
}

.week-select::before {
  content: "";
  position: absolute;
  right: 0;
  top: 0;
  width: 16px;
  height: 16px;
  background-color: #e4e4e4;
  border: 1px solid #707070;
  border-radius: 2px;
}

.week-select select {
  appearance: none;
  width: 100%;
  height: 16px;
  padding: 0 4px;
  border: 0;
  background: none;
  color: #000;
  font: 11px "Liberation Sans", sans-serif;
}

.region h3 {
  margin-top: 18px;
  color: #fff;
  font-size: 8px;
  line-height: 16px;
  font-weight: bold;
  text-align: right;
}

.region-body {
  display: flex;
  align-items: flex-start;
  gap: 12px;
  padding: 1px 0 0 22px;
}

.pie-legend {
  padding-top: 34px;
}

.pie-legend li {
  display: flex;
  align-items: center;
  gap: 2px;
  height: 20px;
  color: #595959;
  font-size: 10px;
}

.pie-legend li::before {
  content: "";
  width: 8px;
  height: 8px;
  border: 2px solid #fff;
}

.bac::before { background-color: #5b9bd5; }
.trung::before { background-color: #ed7d31; }
.nam::before { background-color: #a5a5a5; }
.dong::before { background-color: #ffc000; }

.lower {
  display: flex;
  align-items: flex-start;
  margin: 20px 0 0 50px;
}

.averages {
  display: flex;
  flex-direction: column;
  gap: 20px;
  width: 261px;
  margin-right: 22px;
}

.average {
  height: 99px;
  padding: 7px 0 0;
  background-color: #5b9bd5;
  border: 1px solid #41719c;
  color: #fff;
  text-align: center;
}

.average h3 {
  font-size: 11px;
  line-height: 20px;
  white-space: nowrap;
}

.average p {
  margin-top: 15px;
  padding-right: 10px;
  color: #ff0;
  font: 22px/32px "Open Sans", sans-serif;
}

.profit p {
  margin-top: 8px;
}

.top-card,
.week-card {
  height: 236px;
  background-color: #fff;
  border: 1px solid #d9d9d9;
}

.top-card {
  width: 417px;
  margin-right: 22px;
}

.week-card {
  display: flex;
  flex-direction: column;
  align-items: center;
  width: 225px;
}

.week-card h3 {
  margin: 9px 29px 22px 0;
  font-size: 11px;
  line-height: 20px;
  color: #595959;
}

.ring-legend {
  display: flex;
  gap: 6px;
  margin-top: 22px;
  color: #595959;
}

.ring-legend li {
  display: flex;
  align-items: center;
  gap: 4px;
  font-size: 10px;
}

.ring-legend li::before {
  content: "";
  width: 4px;
  height: 4px;
  background-color: #b5d2ec;
}

.ring-legend .current::before {
  background-color: #ed7d31;
}

/* scroll bars */
.vscroll {
  display: flex;
  flex-direction: column;
  width: 20px;
  padding: 2px 2px 0 3px;
}

.vscroll button,
.hscroll button {
  display: flex;
  align-items: center;
  justify-content: center;
  width: 15px;
  height: 15px;
  flex: none;
  background-color: #fff;
  border: 1px solid #ababab;
}

.track {
  flex: 1;
  background-color: #dadada;
}

.track .thumb {
  height: 87%;
}

.thumb {
  background-color: #fff;
  border: 1px solid #ababab;
}

.up, .down, .left, .right {
  border: 4px solid transparent;
}

.up { border-bottom-color: #777; border-top: 0; }
.down { border-top-color: #777; border-bottom: 0; }
.left { border-right-color: #777; border-left: 0; }
.right { border-left-color: #777; border-right: 0; }

/* sheet tabs */
.sheet-tabs {
  display: flex;
  height: 25px;
  flex: none;
  padding-right: 20px;
  border-top: 1px solid #9b9b9b;
}

.sheet-tabs > button {
  height: 20px;
  margin-top: 3px;
  padding: 0 13px 0 12px;
  border-left: 1px solid #ababab;
}

.sheet-nav {
  display: flex;
  align-items: center;
  gap: 24px;
  width: 100px;
  padding-left: 26px;
  opacity: 0.35;
}

.sheet-tabs > .active {
  height: 25px;
  margin-top: -1px;
  padding: 3px 11px 0;
  background-color: #fff;
  border-left: 1px solid #9b9b9b;
  border-right: 1px solid #9b9b9b;
  border-bottom: 2px solid #217346;
  color: #217346;
  font-weight: bold;
}

.sheet-tabs > .add {
  margin-left: 20px;
  border-left: 0;
}

.sheet-tabs .dots {
  margin: 8px 15px 0 auto;
}

.hscroll {
  display: flex;
  width: 474px;
  height: 15px;
  margin-top: 6px;
  background-color: #dadada;
}

.hscroll .thumb {
  width: 423px;
  margin-right: auto;
}
```
FILE: script.js
```js
const SVG = "http://www.w3.org/2000/svg";

function add(parent, tag, attrs, text) {
  const el = document.createElementNS(SVG, tag);
  for (const key in attrs) el.setAttribute(key, attrs[key]);
  if (text !== undefined) el.textContent = text;
  parent.appendChild(el);
  return el;
}

function label(svg, x, y, text, cls, rotate) {
  const attrs = { x, y, class: cls };
  if (rotate) attrs.transform = `rotate(-90 ${x} ${y})`;
  add(svg, "text", attrs, text);
}

// sheet headings
const colHead = document.getElementById("colHead");
for (const letter of "ABCDEFGHIJKLMNOPQRSTUV") {
  const span = document.createElement("span");
  span.textContent = letter;
  colHead.appendChild(span);
}

const rowHead = document.getElementById("rowHead");
for (let i = 1; i <= 28; i++) {
  const div = document.createElement("div");
  div.textContent = i;
  rowHead.appendChild(div);
}

// sales by staff
const sales = [7116, 4653, 6106, 7114, 6252, 6238, 5951, 5570, 7878, 6487];
const salesChart = document.getElementById("salesChart");
label(salesChart, 184, 21, "DOANH SỐ THEO NHÂN VIÊN BÁN HÀNG", "title");
label(salesChart, 30, 64, "Millions", "axis-name", true);
for (let i = 0; i <= 9; i++) {
  const text = i === 0 ? "-" : i + ",000";
  label(salesChart, i === 0 ? 59 : 65, 178 - i * 15, text, "end");
}
sales.forEach((value, i) => {
  const x = 92 + i * 32.3;
  const h = (value / 9000) * 135;
  add(salesChart, "rect", { x: x - 8, y: 175 - h, width: 16, height: h, fill: i === 8 ? "#ed7d31" : "#5b9bd5" });
  label(salesChart, x + 3, 175 - h / 2, value.toLocaleString("en-US"), "tiny", true);
  label(salesChart, x, 192, "S" + String(i + 1).padStart(2, "0"), "mid");
});
add(salesChart, "path", { d: "M77 175.5h323", stroke: "#d9d9d9" });
add(salesChart, "path", { d: "M92 80.500h291", stroke: "#a5a5a5", "stroke-width": 3 });
sales.forEach((value, i) => add(salesChart, "circle", { cx: 92 + i * 32.3, cy: 80.5, r: 3, fill: "#a5a5a5" }));

// sales by region
const regions = [
  { part: 22, color: "#5b9bd5", x: 82, y: 43 },
  { part: 25, color: "#ed7d31", x: 88, y: 84 },
  { part: 26, color: "#a5a5a5", x: 45, y: 92 },
  { part: 27, color: "#ffc000", x: 39, y: 47 },
];
const pieChart = document.getElementById("pieChart");
let total = 0;
function piePoint(percent) {
  const angle = (percent / 100) * 2 * Math.PI;
  return `${63 + 61 * Math.sin(angle)} ${63 - 61 * Math.cos(angle)}`;
}
regions.forEach((r) => {
  const d = `M63 63L${piePoint(total)}A61 61 0 0 1 ${piePoint(total + r.part)}z`;
  add(pieChart, "path", { d, fill: r.color, stroke: "#fff", "stroke-width": 2, "stroke-linejoin": "round" });
  total += r.part;
});
regions.forEach((r) => label(pieChart, r.x, r.y, r.part + "%", "pie-value"));

// top 10 customers
const customers = [
  ["KH14", 2054, 2.85],
  ["KH37", 2076, 3.52],
  ["KH10", 2144, 2.59],
  ["KH32", 2213, 4.92],
  ["KH29", 2284, 4.35],
  ["KH09", 2415, 3.51],
  ["KH35", 2422, 4.06],
  ["KH20", 2466, 3.02],
  ["KH24", 2572, 4.69],
  ["KH06", 2596, 3.98],
];
const topChart = document.getElementById("topChart");
label(topChart, 207, 22, "TOP 10 KHÁCH HÀNG QUAN TRỌNG NHẤT", "title");
label(topChart, 25, 63, "Millions", "axis-name", true);
for (let i = 0; i <= 6; i++) {
  const y = 210 - i * 27.9;
  const text = i === 0 ? "-" : (i * 500).toLocaleString("en-US");
  label(topChart, i === 0 ? 54 : 60, y, text, "end");
  label(topChart, 408, y, i + ".00%", "end");
}
const points = customers.map((c, i) => [87 + i * 29.9, 207 - (c[2] / 6) * 167]);
customers.forEach(([name, value], i) => {
  const h = (value / 3000) * 167;
  const x = points[i][0];
  add(topChart, "rect", { x: x - 7, y: 207 - h, width: 14, height: h, fill: "#5b9bd5" });
  label(topChart, x, 224, name, "mid");
});
add(topChart, "path", { d: "M73 207.500h299", stroke: "#d9d9d9" });
add(topChart, "polyline", { points: points.join(" "), fill: "none", stroke: "#ed7d31", "stroke-width": 3, "stroke-linejoin": "round" });
customers.forEach(([name, value, percent], i) => {
  const [x, y] = points[i];
  add(topChart, "circle", { cx: x, cy: y, r: 4.5, fill: "#c55a11" });
  label(topChart, x + 4, 207 - value / 36, value.toLocaleString("en-US"), "bar-value", true);
  label(topChart, x, y - 12, percent.toFixed(2) + "%", "tiny red");
});
```
